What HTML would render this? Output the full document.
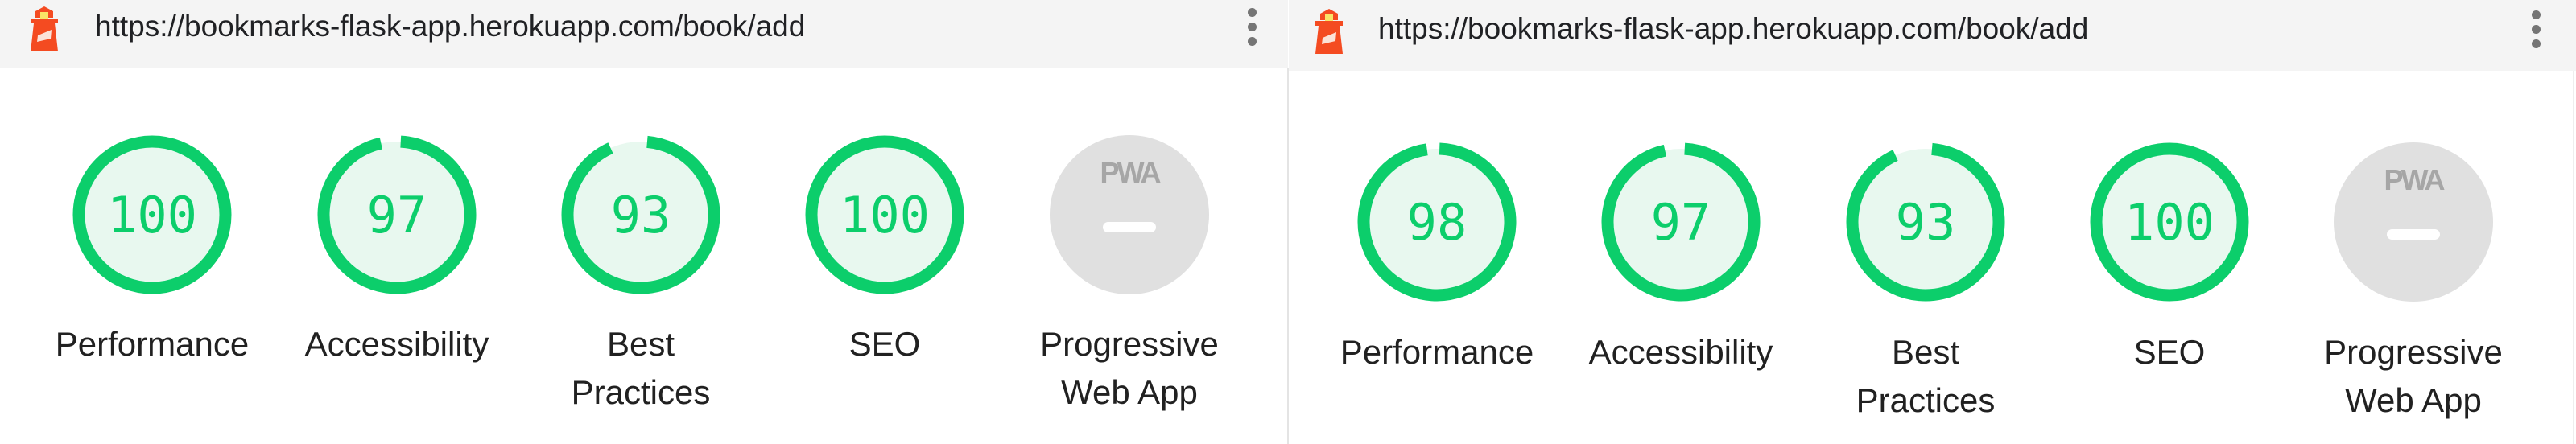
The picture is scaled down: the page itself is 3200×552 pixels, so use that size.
<!DOCTYPE html>
<html><head><meta charset="utf-8"><style>
html,body{margin:0;padding:0;width:3200px;height:552px;overflow:hidden;background:#fff;font-family:"Liberation Sans",Arial,sans-serif}
.hdr{position:absolute;background:#f4f4f4}
.url{position:absolute;font-size:37px;color:#202124;white-space:nowrap;line-height:1}
.dot{position:absolute;width:11px;height:11px;border-radius:50%;background:#757575}
.g{position:absolute}
.lbl{position:absolute;width:300px;margin-left:-150px;text-align:center;font-size:42px;color:#212121;line-height:60px}
</style></head><body>
<div class="hdr" style="left:0;top:0;width:1600px;height:84px"></div>
<div class="hdr" style="left:1601px;top:0;width:1599px;height:88px"></div>
<div style="position:absolute;left:1599px;top:84px;width:2px;height:468px;background:#e4e4e4"></div>
<div style="position:absolute;left:3196px;top:88px;width:2px;height:464px;background:#eeeeee"></div>

<svg class="g" style="left:36px;top:8px" width="38" height="56" viewBox="0 0 38 56">
<polygon points="19,0 30,6 30,14 8,14 8,6" fill="#f44b21"/><rect x="14" y="7" width="10" height="8" fill="#f9e467"/>
<rect x="2" y="15" width="34" height="6" fill="#f44b21"/><polygon points="6,21 32,21 36,56 2,56" fill="#f44b21"/>
<polygon points="11,36 28,29 27,40 10,44" fill="#fbe2d8"/></svg>
<div class="url" style="left:118px;top:14px">https://bookmarks-flask-app.herokuapp.com/book/add</div>
<div class="dot" style="left:1550px;top:10px"></div><div class="dot" style="left:1550px;top:28px"></div><div class="dot" style="left:1550px;top:46px"></div>

<svg class="g" style="left:1632px;top:11px" width="38" height="56" viewBox="0 0 38 56">
<polygon points="19,0 30,6 30,14 8,14 8,6" fill="#f44b21"/><rect x="14" y="7" width="10" height="8" fill="#f9e467"/>
<rect x="2" y="15" width="34" height="6" fill="#f44b21"/><polygon points="6,21 32,21 36,56 2,56" fill="#f44b21"/>
<polygon points="11,36 28,29 27,40 10,44" fill="#fbe2d8"/></svg>
<div class="url" style="left:1712px;top:17px">https://bookmarks-flask-app.herokuapp.com/book/add</div>
<div class="dot" style="left:3145px;top:13px"></div><div class="dot" style="left:3145px;top:31px"></div><div class="dot" style="left:3145px;top:49px"></div>

<svg class="g" style="left:0;top:0" width="3200" height="552">
<defs>
<g id="pwa"><circle r="99" fill="#e0e0e0"/><text x="0" y="-40" text-anchor="middle" font-family="Liberation Sans,sans-serif" font-weight="bold" font-size="36" fill="#a6a6a6" letter-spacing="-3">PWA</text><rect x="-33" y="9" width="66" height="13" rx="6.5" fill="#fff"/></g>
</defs>
<g font-family="DejaVu Sans Mono,Liberation Mono,monospace" font-size="62" fill="#0cce6b" text-anchor="middle">
<g transform="translate(189,267)"><circle r="91" fill="#e8f8ef" stroke="#0cce6b" stroke-width="15"/><text y="22">100</text></g>
<g transform="translate(493,267)"><circle r="91" fill="#e8f8ef"/><circle r="91" fill="none" stroke="#0cce6b" stroke-width="15" stroke-dasharray="547 600" transform="rotate(-87)"/><text y="22">97</text></g>
<g transform="translate(796,267)"><circle r="91" fill="#e8f8ef"/><circle r="91" fill="none" stroke="#0cce6b" stroke-width="15" stroke-dasharray="525 600" transform="rotate(-85)"/><text y="22">93</text></g>
<g transform="translate(1099,267)"><circle r="91" fill="#e8f8ef" stroke="#0cce6b" stroke-width="15"/><text y="22">100</text></g>
<use href="#pwa" x="1403" y="267"/>
<g transform="translate(1785,276)"><circle r="91" fill="#e8f8ef"/><circle r="91" fill="none" stroke="#0cce6b" stroke-width="15" stroke-dasharray="556 600" transform="rotate(-88)"/><text y="22">98</text></g>
<g transform="translate(2088,276)"><circle r="91" fill="#e8f8ef"/><circle r="91" fill="none" stroke="#0cce6b" stroke-width="15" stroke-dasharray="547 600" transform="rotate(-87)"/><text y="22">97</text></g>
<g transform="translate(2392,276)"><circle r="91" fill="#e8f8ef"/><circle r="91" fill="none" stroke="#0cce6b" stroke-width="15" stroke-dasharray="525 600" transform="rotate(-85)"/><text y="22">93</text></g>
<g transform="translate(2695,276)"><circle r="91" fill="#e8f8ef" stroke="#0cce6b" stroke-width="15"/><text y="22">100</text></g>
<use href="#pwa" x="2998" y="276"/>
</g>
</svg>

<div class="lbl" style="left:189px;top:398px">Performance</div>
<div class="lbl" style="left:493px;top:398px">Accessibility</div>
<div class="lbl" style="left:796px;top:398px">Best<br>Practices</div>
<div class="lbl" style="left:1099px;top:398px">SEO</div>
<div class="lbl" style="left:1403px;top:398px">Progressive<br>Web App</div>

<div class="lbl" style="left:1785px;top:408px">Performance</div>
<div class="lbl" style="left:2088px;top:408px">Accessibility</div>
<div class="lbl" style="left:2392px;top:408px">Best<br>Practices</div>
<div class="lbl" style="left:2695px;top:408px">SEO</div>
<div class="lbl" style="left:2998px;top:408px">Progressive<br>Web App</div>
</body></html>
